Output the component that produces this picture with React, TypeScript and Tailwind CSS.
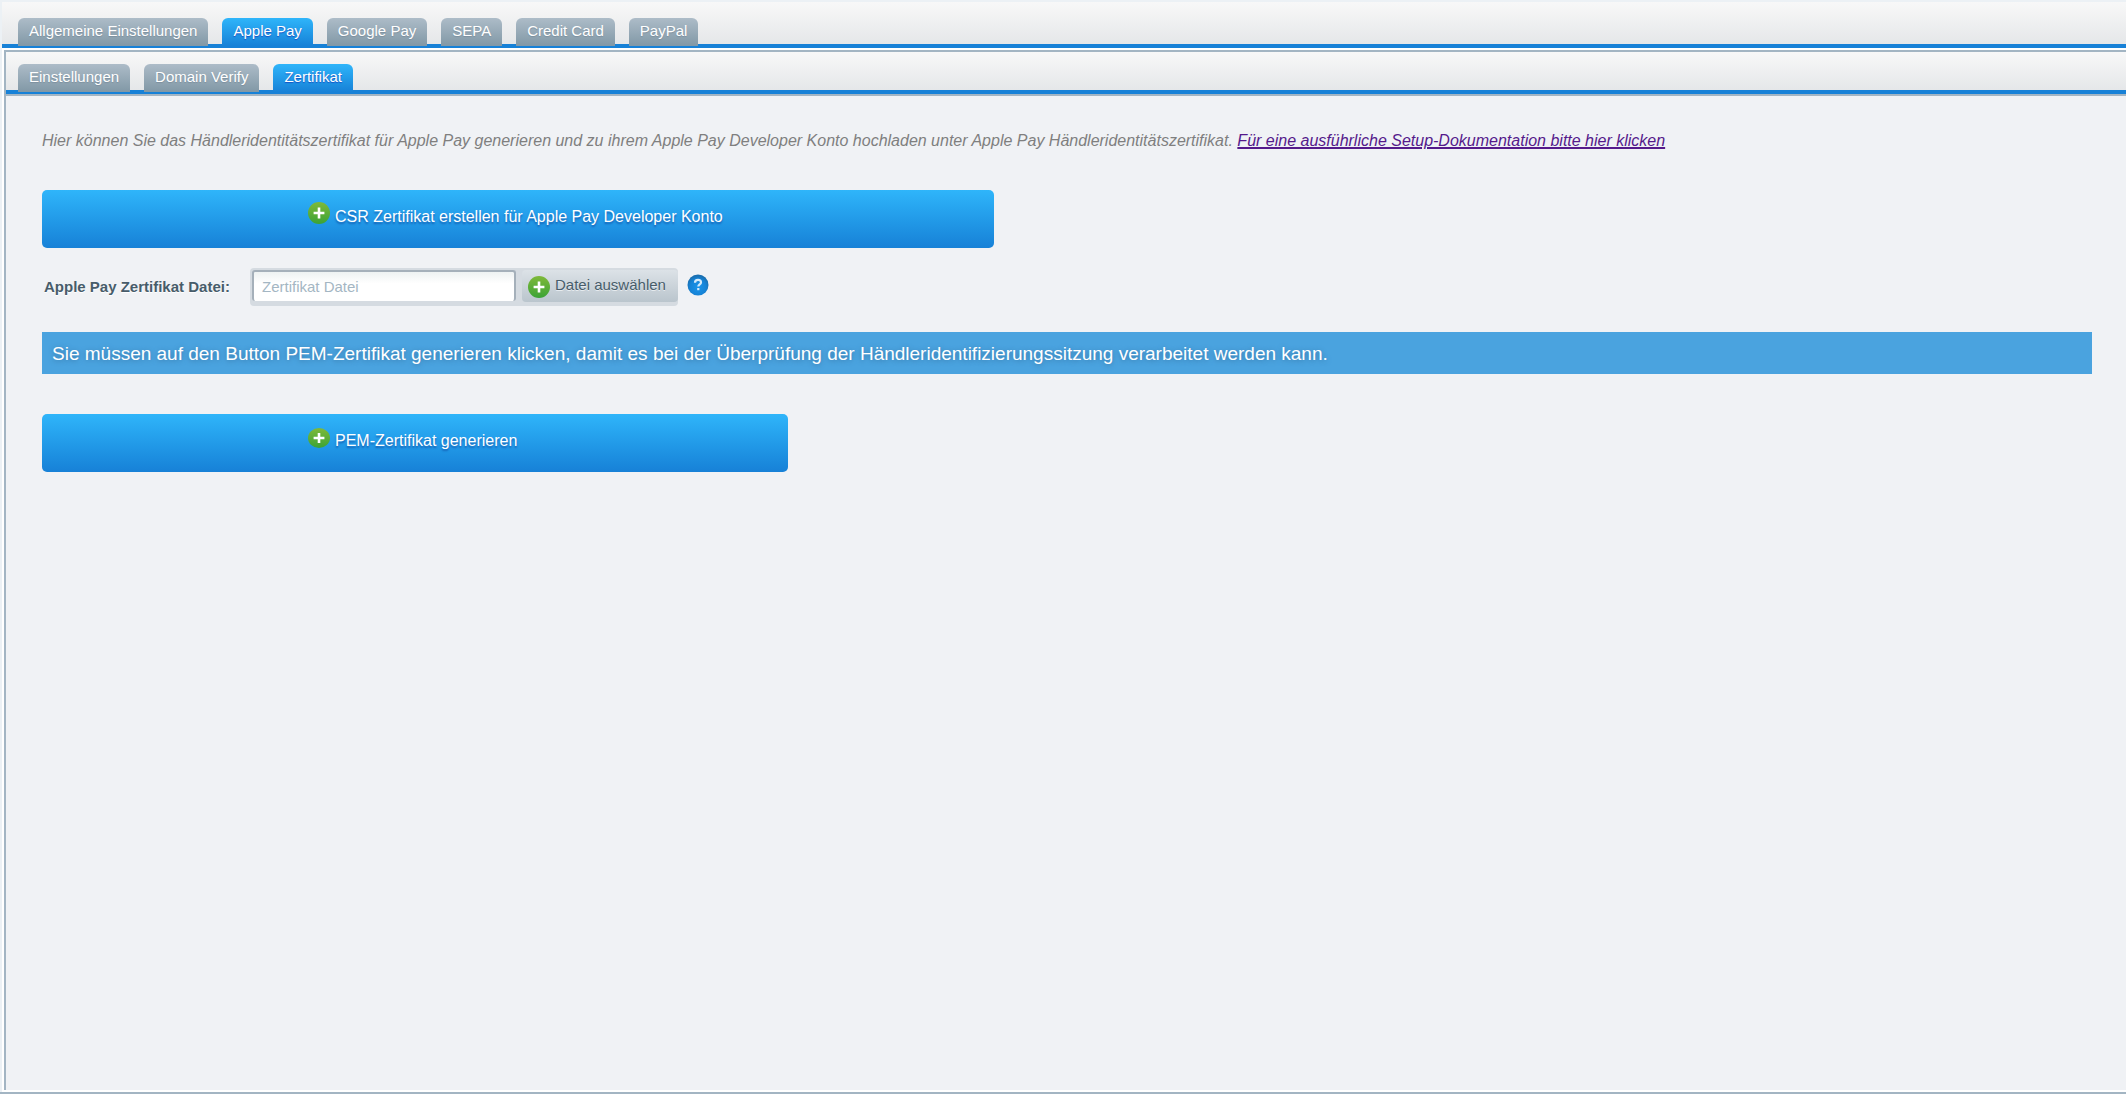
import { useId, useRef, useState } from 'react';

interface TabBarProps {
  label: string;
  tabs: string[];
  active: string;
  onSelect: (tab: string) => void;
  className: string;
}

function TabBar({ label, tabs, active, onSelect, className }: TabBarProps) {
  return (
    <div
      role="tablist"
      aria-label={label}
      className={`flex items-start gap-3.5 border-b-4 border-[#1781d7] bg-linear-to-b from-[#f8f8f8] to-[#e5e7e9] ${className}`}
    >
      {tabs.map((tab) => (
        <button
          key={tab}
          type="button"
          role="tab"
          aria-selected={tab === active}
          onClick={() => onSelect(tab)}
          className={`-mb-2 h-7 shrink-0 rounded-t-md px-[11px] pb-0.5 text-[15px] leading-5 text-white bg-linear-to-b ${
            tab === active
              ? 'from-[#2fb5fa] to-[#1781d7] [text-shadow:0_1px_1px_#1552c4]'
              : 'from-[#adbcc8] to-[#8198a6] [text-shadow:0_1px_1px_#7c8f9e]'
          }`}
        >
          {tab}
        </button>
      ))}
    </div>
  );
}

function PlusIcon({ className = '' }: { className?: string }) {
  const gradient = useId();
  return (
    <svg viewBox="0 0 22 22" preserveAspectRatio="none" className={`w-[22px] shrink-0 ${className}`} aria-hidden="true">
      <defs>
        <linearGradient id={gradient} x1="0" y1="0" x2="0" y2="1">
          <stop offset="0" stopColor="#7fb93a" />
          <stop offset="1" stopColor="#3ba336" />
        </linearGradient>
      </defs>
      <circle cx="11" cy="11" r="11" fill={`url(#${gradient})`} />
      <path d="M11 5.6v10.8M5.6 11h10.8" stroke="#fff" strokeWidth="2.6" />
    </svg>
  );
}

function HelpIcon() {
  const gradient = useId();
  return (
    <svg viewBox="0 0 22 22" className="size-[22px]" aria-hidden="true">
      <defs>
        <radialGradient id={gradient} cx="0.5" cy="0.6" r="0.55">
          <stop offset="0" stopColor="#1a94ea" />
          <stop offset="0.7" stopColor="#1583d6" />
          <stop offset="1" stopColor="#1a6fb0" />
        </radialGradient>
      </defs>
      <circle cx="11" cy="11" r="10.5" fill={`url(#${gradient})`} />
      <path
        d="M8 8.8c0-1.9 1.3-2.9 3-2.9s3 1 3 2.500c0 2-2.7 2.1-2.7 4.2"
        fill="none"
        stroke="#d5eafa"
        strokeWidth="2.2"
      />
      <rect x="10.2" y="14" width="2.2" height="2.2" fill="#d5eafa" />
    </svg>
  );
}

function ActionButton({ children, iconClass }: { children: string; iconClass: string }) {
  return (
    <button
      type="button"
      className="flex h-[58px] items-start gap-[5px] rounded-[5px] bg-linear-to-b from-[#2fb5fa] to-[#1781d7] pt-3 pr-[271px] pl-[266px] text-base text-white [text-shadow:0_2px_2px_#1560b4]"
    >
      <PlusIcon className={iconClass} />
      <span className="pt-[3px] whitespace-nowrap">{children}</span>
    </button>
  );
}

const MAIN_TABS = ['Allgemeine Einstellungen', 'Apple Pay', 'Google Pay', 'SEPA', 'Credit Card', 'PayPal'];
const SUB_TABS = ['Einstellungen', 'Domain Verify', 'Zertifikat'];

export default function App() {
  const [mainTab, setMainTab] = useState('Apple Pay');
  const [subTab, setSubTab] = useState('Zertifikat');
  const [fileName, setFileName] = useState('');
  const fileInput = useRef<HTMLInputElement>(null);

  return (
    <div className="flex min-h-screen flex-col border-b-2 border-[#a3b5c3] bg-[#ecf1f5] pt-0.5 pl-0.5 font-['Liberation_Sans',Arial,sans-serif]">
      <TabBar
        label="Zahlungsarten"
        tabs={MAIN_TABS}
        active={mainTab}
        onSelect={setMainTab}
        className="h-[46px] pt-4 pl-4"
      />

      <div className="flex grow flex-col bg-white py-0.5 pl-0.5">
        <div className="flex grow flex-col border-t-2 border-l-2 border-[#a3b5c3] bg-[#f0f2f5]">
          <TabBar
            label="Apple Pay"
            tabs={SUB_TABS}
            active={subTab}
            onSelect={setSubTab}
            className="h-[42px] pt-3 pl-3"
          />

          <main className="flex flex-col items-start border-t-2 border-[#a3b5c3] pr-[34px] pl-9">
            <p className="mt-[33px] text-base text-[#7f7f7f] italic">
              Hier können Sie das Händleridentitätszertifikat für Apple Pay generieren und zu ihrem Apple Pay Developer
              Konto hochladen unter Apple Pay Händleridentitätszertifikat.{' '}
              <a href="#dokumentation" className="text-[#551a8b] underline decoration-2">
                Für eine ausführliche Setup-Dokumentation bitte hier klicken
              </a>
            </p>

            <div className="mt-[37px]">
              <ActionButton iconClass="h-[22px]">CSR Zertifikat erstellen für Apple Pay Developer Konto</ActionButton>
            </div>

            <div className="mt-5 flex items-start">
              <label
                htmlFor="certificate"
                className="w-[208px] pt-2 pl-0.5 text-[15px] font-bold text-[#475c6a] [text-shadow:0_1px_0_#fff]"
              >
                Apple Pay Zertifikat Datei:
              </label>
              <div className="flex h-[38px] items-start rounded-[4px] bg-[#d5dbe1] pt-0.5 pl-0.5">
                <input
                  id="certificate"
                  type="text"
                  readOnly
                  value={fileName}
                  placeholder="Zertifikat Datei"
                  className="h-[31px] w-[264px] rounded-[3px] border-2 border-b-0 border-[#a5b0ba] bg-white bg-linear-to-b from-[#eef2f2] to-white to-40% px-2 text-[15px] text-[#475c6a] placeholder:text-[#a4b6c3]"
                />
                <button
                  type="button"
                  onClick={() => fileInput.current?.click()}
                  className="ml-1.5 flex h-8 items-start gap-[5px] rounded-[4px] bg-linear-to-b from-[#dce2e7] to-[#bac5cd] pr-3 pl-1.5 text-[15px] leading-[30px] text-[#475c6a] [text-shadow:0_1px_0_#e6ebef]"
                >
                  <PlusIcon className="mt-1.5 h-[22px]" />
                  Datei auswählen
                </button>
                <input
                  ref={fileInput}
                  type="file"
                  aria-label="Zertifikat Datei auswählen"
                  className="hidden"
                  onChange={(e) => setFileName(e.target.files?.[0]?.name ?? '')}
                />
              </div>
              <button type="button" aria-label="Hilfe" className="mt-1.5 ml-[9px]">
                <HelpIcon />
              </button>
            </div>

            <p className="mt-[26px] w-full bg-[#4aa3df] px-2.5 pt-[9px] pb-[7px] text-[19px] leading-[26px] text-white [text-shadow:0_1px_5px_#3878a8]">
              Sie müssen auf den Button PEM-Zertifikat generieren klicken, damit es bei der Überprüfung der
              Händleridentifizierungssitzung verarbeitet werden kann.
            </p>

            <div className="mt-10">
              <ActionButton iconClass="h-5 mt-0.5">PEM-Zertifikat generieren</ActionButton>
            </div>
          </main>
        </div>
      </div>
    </div>
  );
}
